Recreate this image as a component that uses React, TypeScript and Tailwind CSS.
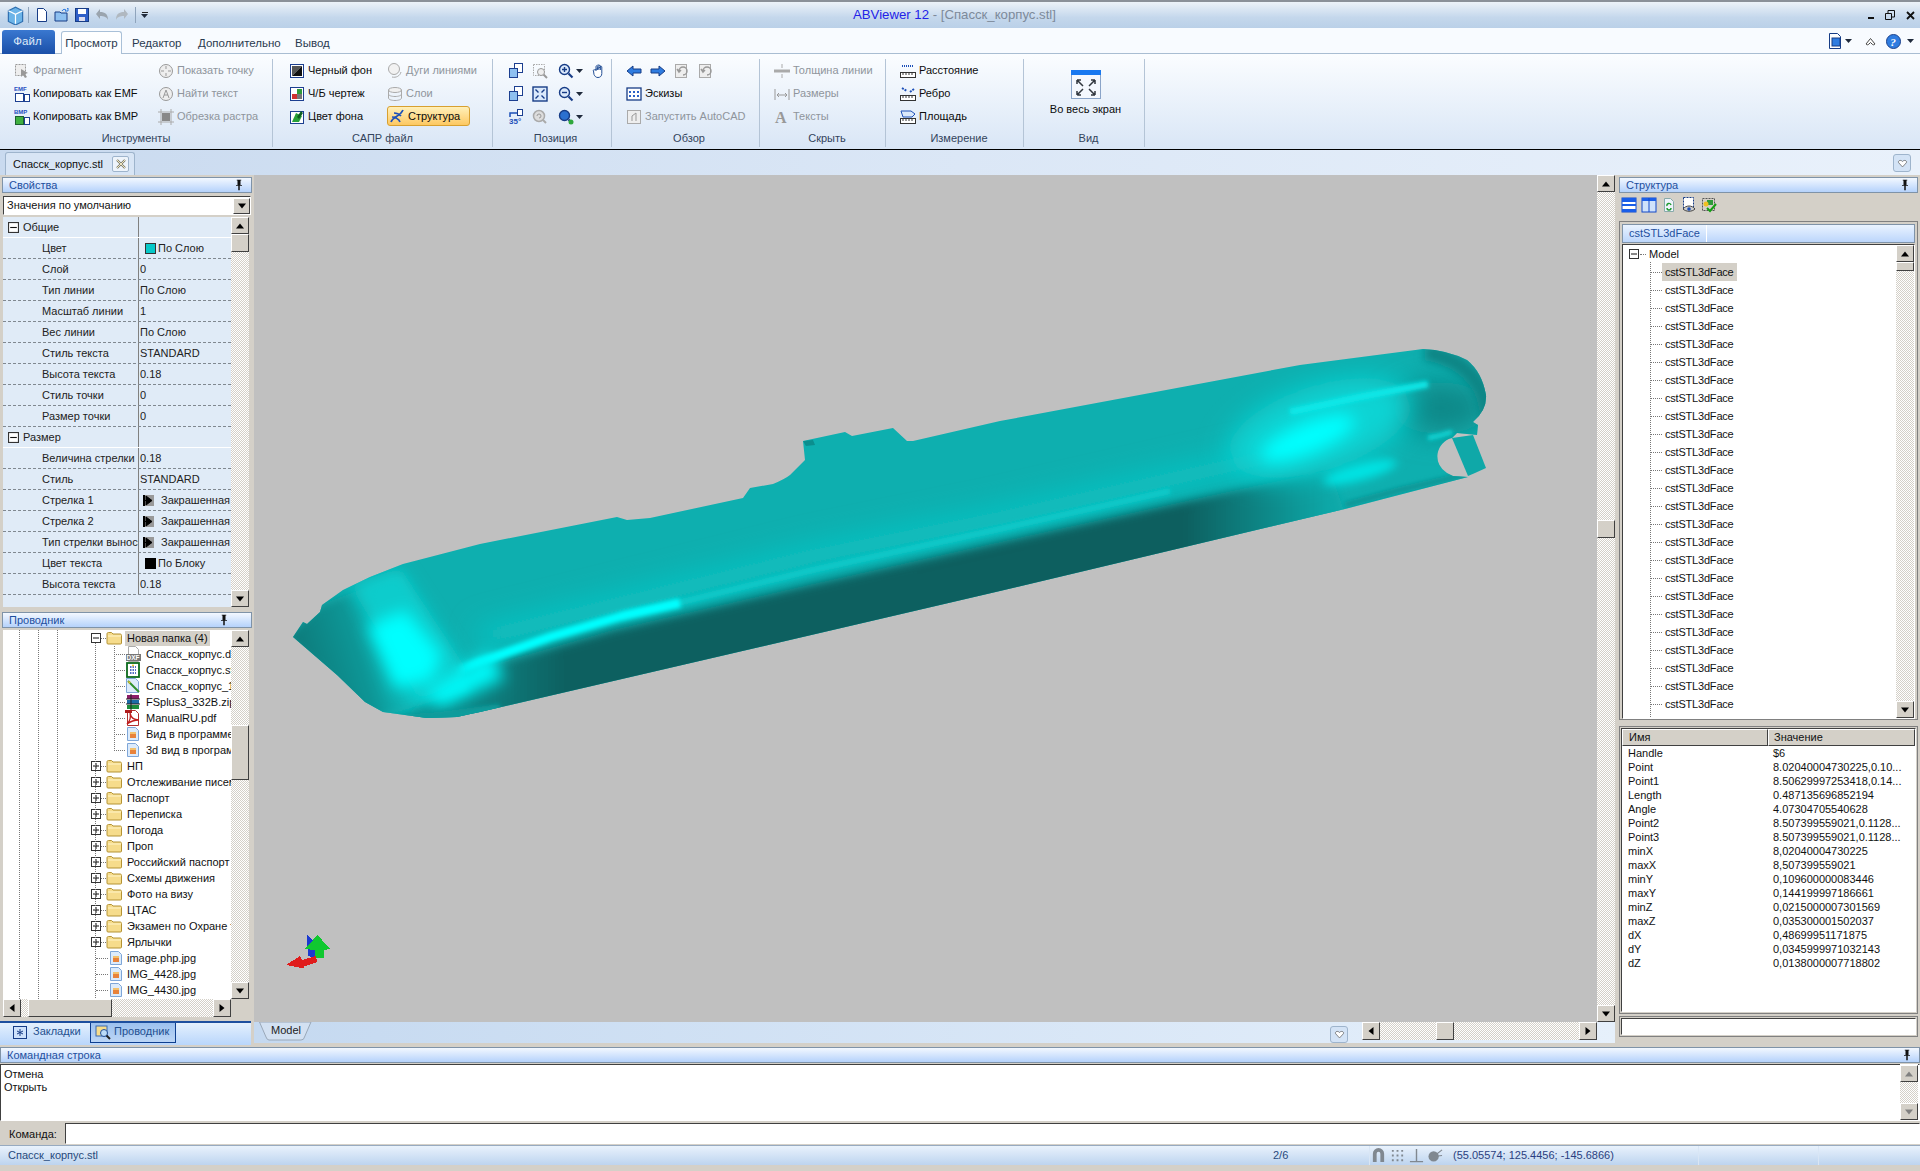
import type { ReactNode } from "react";

const FRAME = "border border-t-white border-l-white border-r-[#404040] border-b-[#404040] bg-[#d4d0c8]";
const TRACK = "bg-[repeating-conic-gradient(#d4d0c8_0_25%,#ffffff_0_50%)] bg-[length:2px_2px]";
const SUNKEN = "border border-t-[#404040] border-l-[#404040] border-r-white border-b-white";
const HEADER = "flex h-[16px] items-center justify-between border border-[#7f93a8] bg-gradient-to-b from-[#f3f8ff] to-[#b5d2fb] pl-[6px] pr-[6px] text-[11px] text-[#1e4f9e]";

function Svg({ size = 16, children, className }: { size?: number; children: ReactNode; className?: string }) {
  return (
    <svg width={size} height={size} viewBox="0 0 16 16" className={`shrink-0 ${className ?? ""}`}>
      {children}
    </svg>
  );
}

const ICONS: Record<string, ReactNode> = {
  fragment: (
    <>
      <rect x="1.5" y="1.5" width="10" height="11" fill="#eee" stroke="#999" strokeDasharray="2 1" />
      <path d="M7 6l7 4-3 1 2 3-2 1-2-3-2 2z" fill="#999" />
    </>
  ),
  emf: (
    <>
      <text x="0" y="5" fontSize="6" fill="#1f4fc0" fontFamily="Liberation Sans" fontWeight="700">EMF</text>
      <rect x="1.5" y="7.5" width="8" height="8" fill="#fff" stroke="#1c3f90" />
      <rect x="10.5" y="8.5" width="5" height="7" fill="#fff" stroke="#1c3f90" />
    </>
  ),
  bmp: (
    <>
      <text x="0" y="5" fontSize="6" fill="#1f4fc0" fontFamily="Liberation Sans" fontWeight="700">BMP</text>
      <rect x="1.5" y="7.5" width="8" height="8" fill="#40b040" stroke="#1c5f30" />
      <rect x="10.5" y="8.5" width="5" height="7" fill="#fff" stroke="#1c3f90" />
    </>
  ),
  point: (
    <>
      <circle cx="8" cy="8" r="6.5" fill="#eee" stroke="#999" />
      <path d="M8 3v3M8 10v3M3 8h3M10 8h3" stroke="#999" />
    </>
  ),
  findText: (
    <>
      <circle cx="8" cy="8" r="6.5" fill="#eee" stroke="#999" />
      <path d="M5 12l3-8 3 8M6 9h4" stroke="#999" fill="none" />
    </>
  ),
  crop: (
    <>
      <path d="M3 0v16M13 0v16M0 3h16M0 13h16" stroke="#aaa" />
      <rect x="4" y="4" width="8" height="8" fill="#888" />
    </>
  ),
  black: (
    <>
      <rect x="1.5" y="1.5" width="13" height="13" fill="#fff" stroke="#1c3f90" />
      <path d="M3 13V3h10z" fill="#555" />
      <path d="M13 3v10H3z" fill="#111" />
    </>
  ),
  bw: (
    <>
      <rect x="1.5" y="1.5" width="13" height="13" fill="#fff" stroke="#1c3f90" />
      <rect x="8" y="3" width="5" height="5" fill="#2f9a3a" />
      <rect x="3" y="8" width="5" height="5" fill="#d03030" />
      <rect x="8" y="8" width="5" height="5" fill="#777" />
    </>
  ),
  bgcolor: (
    <>
      <rect x="1.5" y="2.5" width="13" height="12" fill="#fff" stroke="#1c3f90" />
      <path d="M3 13l4-9 6 3-3 6z" fill="#28a038" />
      <path d="M8 8l4-6 2 2-4 6z" fill="#0c5f20" />
    </>
  ),
  arcs: (
    <>
      <circle cx="7" cy="6" r="5.5" fill="#f2f2f2" stroke="#aaa" />
      <path d="M5 14c4 1 8-1 9-5" fill="none" stroke="#aaa" />
    </>
  ),
  layers: (
    <>
      <ellipse cx="8" cy="4" rx="6.5" ry="2.5" fill="#f0f0f0" stroke="#aaa" />
      <path d="M1.5 4v8c0 1.5 3 2.5 6.5 2.5s6.5-1 6.5-2.5V4M1.5 8c0 1.5 3 2.5 6.5 2.5s6.5-1 6.5-2.5" fill="none" stroke="#aaa" />
    </>
  ),
  dna: (
    <path d="M2 14C4 8 11 9 14 2M3 9c3 0 7 2 8 5M5 5c2 0 5 1 7 3" fill="none" stroke="#1d50b8" strokeWidth="1.7" />
  ),
  pagesA: (
    <>
      <rect x="6.5" y="0.5" width="8" height="9" fill="#fff" stroke="#1c3f90" />
      <rect x="1.5" y="5.5" width="8" height="9" fill="#8ec0f0" stroke="#1c3f90" />
    </>
  ),
  zoomWin: (
    <>
      <rect x="1.5" y="1.5" width="11" height="11" fill="none" stroke="#aaa" strokeDasharray="1.5 1" />
      <circle cx="9" cy="9" r="3.5" fill="#eee" stroke="#999" />
      <path d="M12 12l3 3" stroke="#999" strokeWidth="2" />
    </>
  ),
  zoomIn: (
    <>
      <circle cx="6.5" cy="6.5" r="5" fill="#dbe9fb" stroke="#173c86" strokeWidth="1.4" />
      <path d="M4 6.5h5M6.5 4v5" stroke="#173c86" strokeWidth="1.4" />
      <path d="M10.5 10.5l4 4" stroke="#173c86" strokeWidth="2.2" />
    </>
  ),
  zoomOut: (
    <>
      <circle cx="6.5" cy="6.5" r="5" fill="#dbe9fb" stroke="#173c86" strokeWidth="1.4" />
      <path d="M4 6.5h5" stroke="#173c86" strokeWidth="1.4" />
      <path d="M10.5 10.5l4 4" stroke="#173c86" strokeWidth="2.2" />
    </>
  ),
  zoomGlobe: (
    <>
      <circle cx="6.5" cy="6.5" r="5" fill="#2b70d0" stroke="#173c86" strokeWidth="1.4" />
      <path d="M10.5 10.5l3 3" stroke="#173c86" strokeWidth="2.2" />
      <circle cx="13" cy="13" r="2.5" fill="#2fa83c" />
    </>
  ),
  hand: (
    <path d="M4 8V3.5c0-1 1.4-1 1.4 0V7m0-4.500c0-1 1.500-1 1.500 0V7m0-4c0-1 1.500-1 1.500 0v4m0-3c0-1 1.400-1 1.400 0v6.500c0 2.500-1.600 4-3.800 4-2 0-3-1-4-3L1.500 8c-.7-1 .7-1.800 1.400-1z" fill="#fff" stroke="#234f96" />
  ),
  fit: (
    <>
      <rect x="1" y="1" width="14" height="14" fill="#dbe9fb" stroke="#173c86" strokeWidth="1.4" />
      <path d="M3.500 3.500l3 3M12.500 3.500l-3 3M3.500 12.500l3-3M12.500 12.500l-3-3" stroke="#173c86" strokeWidth="1.400" />
    </>
  ),
  rot: (
    <>
      <path d="M2 8V4h7" fill="none" stroke="#1d50b8" strokeWidth="1.500" />
      <rect x="9.500" y="0.500" width="5" height="6" fill="#fff" stroke="#1c3f90" />
      <text x="1" y="15" fontSize="8" fill="#1d50b8" fontFamily="Liberation Sans" fontWeight="700">35°</text>
    </>
  ),
  grayZoom: (
    <>
      <circle cx="7" cy="7" r="5.500" fill="#ddd" stroke="#aaa" strokeWidth="1.500" />
      <path d="M5 7a2 2 0 1 1 2 2" fill="none" stroke="#999" />
      <path d="M11 11l3 3" stroke="#aaa" strokeWidth="2" />
    </>
  ),
  left: <path d="M1 8l6-5v3h8v4H7v3z" fill="#2f7ce0" stroke="#173c86" />,
  right: <path d="M15 8L9 3v3H1v4h8v3z" fill="#2f7ce0" stroke="#173c86" />,
  back: (
    <>
      <rect x="1.500" y="1.500" width="11" height="13" fill="#eee" stroke="#aaa" />
      <path d="M5 8a4 4 0 1 1 4 4M3 6l2 3 2-2" fill="none" stroke="#999" strokeWidth="1.500" />
    </>
  ),
  thumbs: (
    <>
      <rect x="1" y="2" width="14" height="12" fill="#fff" stroke="#173c86" strokeWidth="1.300" />
      <path d="M3 5h2v2H3zM7 5h2v2H7zM11 5h2v2h-2zM3 9h2v2H3zM7 9h2v2H7zM11 9h2v2h-2z" fill="#2b62c8" />
    </>
  ),
  autocad: (
    <>
      <rect x="1.500" y="1.500" width="13" height="13" fill="#eee" stroke="#aaa" />
      <path d="M6 12V7l4-3v8" fill="none" stroke="#999" />
    </>
  ),
  thick: <path d="M8 1v4M8 11v4M0 7h16v2H0z" stroke="#aaa" fill="#aaa" />,
  dims: <path d="M1 3v11M15 3v11M3 9h10M3 9l2-2M3 9l2 2M13 9l-2-2M13 9l-2 2" stroke="#999" fill="none" />,
  texts: <text x="1" y="14" fontSize="16" fill="#999" fontFamily="Liberation Serif" fontWeight="700">A</text>,
  dist: (
    <>
      <path d="M2 3h12" stroke="#1d50b8" strokeDasharray="1 1" strokeWidth="2" />
      <rect x="0.500" y="9.500" width="15" height="5" fill="#fff" stroke="#333" />
      <path d="M3 10v2M6 10v2M9 10v2M12 10v2" stroke="#333" />
    </>
  ),
  edge: (
    <>
      <path d="M2 2l5 3M10 6l4-3" stroke="#1d50b8" strokeWidth="2" strokeDasharray="2 1" />
      <rect x="0.500" y="9.500" width="15" height="5" fill="#fff" stroke="#333" />
      <path d="M3 10v2M6 10v2M9 10v2M12 10v2" stroke="#333" />
    </>
  ),
  area: (
    <>
      <path d="M1 2h10l4 3-3 3H3z" fill="#dbe9fb" stroke="#1d50b8" />
      <rect x="0.500" y="9.500" width="15" height="5" fill="#fff" stroke="#333" />
      <path d="M3 10v2M6 10v2M9 10v2M12 10v2" stroke="#333" />
    </>
  ),
  file: <path d="M3.500 1.500h6l3 3v10h-9z" fill="#fff" stroke="#173c86" />,
  open: (
    <>
      <path d="M1 14V5h5l1 1h6v8z" fill="#8ec0f0" stroke="#173c86" />
      <path d="M8 4c1-2 3-2 4-1l-1 1h3V1l-1 1" fill="none" stroke="#2f7ce0" />
    </>
  ),
  save: (
    <>
      <rect x="1.500" y="1.500" width="13" height="13" fill="#2f5fc8" stroke="#173c86" />
      <rect x="4" y="2" width="8" height="5" fill="#fff" />
      <rect x="5" y="10" width="6" height="4" fill="#dde" />
    </>
  ),
  undo: <path d="M2 7l4-5v3c5 0 8 2 8 8-1-3-4-4-8-4v3z" fill="#9aa4ae" />,
  redo: <path d="M14 7l-4-5v3C5 5 2 7 2 13c1-3 4-4 8-4v3z" fill="#b0b8c0" />,
  logo: (
    <>
      <path d="M2 4l6-3 6 3v9l-6 3-6-3z" fill="#6cb4e8" stroke="#2f6fb0" />
      <path d="M8 7v8M2 4l6 3 6-3" stroke="#fff" fill="none" />
    </>
  ),
  rows: (
    <>
      <rect x="1" y="1" width="14" height="14" fill="#fff" stroke="#1348c8" />
      <rect x="1" y="1" width="14" height="4" fill="#1a5ee8" />
      <rect x="1" y="7" width="14" height="2" fill="#1a5ee8" />
      <rect x="1" y="12" width="14" height="3" fill="#1a5ee8" />
    </>
  ),
  cols: (
    <>
      <rect x="1" y="1" width="14" height="14" fill="#cfe2fb" stroke="#1348c8" />
      <rect x="1" y="1" width="14" height="3" fill="#1a5ee8" />
      <path d="M8 1v14" stroke="#1348c8" />
    </>
  ),
  refresh: (
    <>
      <path d="M3.500 1.500h6l3 3v10h-9z" fill="#eef3fb" stroke="#8aa" />
      <path d="M6 9a2 2 0 0 1 4-1M10 11a2 2 0 0 1-4 0" fill="none" stroke="#1c9a2c" strokeWidth="1.400" />
    </>
  ),
  eye: (
    <>
      <rect x="2.500" y="0.500" width="10" height="12" fill="#fff" stroke="#173c86" strokeDasharray="2 1" />
      <path d="M2 12c3-4 9-4 12 0-3 3-9 3-12 0z" fill="#ccc" stroke="#444" />
      <circle cx="8" cy="12" r="1.800" fill="#1d50b8" />
    </>
  ),
  check: (
    <>
      <rect x="1.500" y="1.500" width="12" height="12" fill="none" stroke="#555" strokeDasharray="2 1" />
      <rect x="6" y="3" width="6" height="5" fill="#2f9a3a" />
      <circle cx="5" cy="7" r="2.500" fill="#f0c020" />
      <path d="M6 11l3 3 6-7" fill="none" stroke="#12a012" strokeWidth="2" />
    </>
  ),
  folder: (
    <>
      <path d="M1 13V4c0-1 .5-1.500 1.500-1.500h3L7 4h7c1 0 1.500.5 1.500 1.500V13c0 .8-.5 1-1 1H2c-.6 0-1-.3-1-1z" fill="#f6dc8c" stroke="#b49334" />
      <path d="M2 6h13" stroke="#fff4c8" />
    </>
  ),
  pic: (
    <>
      <path d="M2.500 1.500h8l3 3v10h-11z" fill="#dcebfb" stroke="#7ea6d8" />
      <rect x="5" y="6" width="6" height="6" fill="#e8823a" />
      <rect x="5" y="6" width="6" height="2" fill="#f3c06c" />
    </>
  ),
  dxf: (
    <>
      <path d="M3.500.5h7l3 3v12h-10z" fill="#fff" stroke="#aaa" />
      <rect x="1" y="8" width="15" height="7" fill="#777" />
      <text x="1.500" y="14" fontSize="6.500" fill="#fff" fontFamily="Liberation Sans" fontWeight="700">DXF</text>
    </>
  ),
  sheet: (
    <>
      <rect x="2" y="1" width="12" height="14" fill="#fff" stroke="#0c6a1c" strokeWidth="1.800" />
      <path d="M5 5h6M5 8h6M5 11h6" stroke="#1c3fb0" strokeWidth="1.400" strokeDasharray="1.500 1" />
      <circle cx="8" cy="3.500" r="1" fill="#f0c020" />
    </>
  ),
  pen: (
    <>
      <path d="M1.500.5h9l3 3v11h-12z" fill="#dcebfb" stroke="#7ea6d8" />
      <path d="M3 3l11 11" stroke="#2f8f2c" strokeWidth="2" />
      <path d="M3 3l3 1-2 2z" fill="#e8c030" />
    </>
  ),
  zip: (
    <>
      <rect x="2" y="1" width="12" height="4" fill="#8c1c68" />
      <rect x="2" y="6" width="12" height="4" fill="#1c6ca8" />
      <rect x="2" y="11" width="12" height="4" fill="#1c8c3c" />
      <path d="M6 0v16M1 5h14M1 10h14" stroke="#222" />
    </>
  ),
  pdf: (
    <>
      <path d="M2.500.5h8l3 3v12h-11z" fill="#fff" stroke="#b03030" />
      <path d="M2 14c3-3 4-7 3-11 1 5 4 7 9 7-4 0-8 1-12 4z" fill="none" stroke="#c01c1c" strokeWidth="1.300" />
      <rect x="0" y="0" width="7" height="3" fill="#b01c1c" />
    </>
  ),
  star: (
    <>
      <rect x="1.500" y="2.500" width="13" height="12" fill="#cfe2fb" stroke="#173c86" />
      <path d="M8 5v7M5 7l6 3M11 7l-6 3" stroke="#173c86" />
    </>
  ),
  explorer: (
    <>
      <rect x="1" y="2" width="11" height="10" fill="#f6dc8c" stroke="#3868b0" />
      <circle cx="9" cy="9" r="3.500" fill="#bcdcf8" stroke="#234f96" />
      <path d="M11.500 11.500l3.500 3.500" stroke="#222" strokeWidth="2" />
    </>
  ),
  magnet: <path d="M2 15V6a5 5 0 0 1 12 0v9h-4V6a2 2 0 0 0-4 0v9z" fill="#808890" />,
  grid: <path d="M2 2h2v2H2zM7 2h2v2H7zM12 2h2v2h-2zM2 7h2v2H2zM7 7h2v2H7zM12 7h2v2h-2zM2 12h2v2H2zM7 12h2v2H7zM12 12h2v2h-2z" fill="#808890" />,
  perp: <path d="M8 1v13M1 14.500h14" stroke="#808890" strokeWidth="1.500" />,
  polar: (
    <>
      <circle cx="6" cy="9" r="5.500" fill="#808890" />
      <path d="M6 9l9-7M6 9l9-1" stroke="#808890" strokeWidth="1.200" />
    </>
  ),
  screen: (
    <>
      <path d="M2.500 .5h8l3 3v12h-11z" fill="#fff" stroke="#173c86" />
      <rect x="5" y="5" width="8" height="8" fill="#2f7ce0" stroke="#173c86" />
    </>
  ),
  help: (
    <>
      <circle cx="8" cy="8" r="7.500" fill="#2f7ce0" stroke="#173c86" />
      <text x="4.500" y="13" fontSize="12" fill="#fff" fontFamily="Liberation Serif" fontWeight="700" fontStyle="italic">?</text>
    </>
  ),
  heart: <path d="M8 13L2.500 7c-2-3 3-5 5.500-2 2.500-3 7.500-1 5.500 2z" fill="#fff" stroke="#555" />,
  pin: <path d="M5 1h6v1h-1v6h2v1H9v6H7V9H4V8h2V2H5z" fill="#111" />,
};

function Ico({ name, size = 16 }: { name: string; size?: number }) {
  return <Svg size={size}>{ICONS[name]}</Svg>;
}

function Caret({ className }: { className?: string }) {
  return (
    <svg width="7" height="4" viewBox="0 0 7 4" className={`shrink-0 ${className ?? ""}`}>
      <path d="M0 0h7L3.500 4z" fill="#1f2a3c" />
    </svg>
  );
}

function ScrollBtn({ dir, muted, className }: { dir: "up" | "down" | "left" | "right"; muted?: boolean; className?: string }) {
  const d = { up: "M0 5L4 0l4 5z", down: "M0 0h8L4 5z", left: "M5 0v8L0 4z", right: "M0 0v8l5-4z" }[dir];
  return (
    <div className={`flex shrink-0 items-center justify-center ${FRAME} ${className ?? ""}`}>
      <svg width="8" height="8" viewBox="0 0 8 8">
        <path d={d} fill={muted ? "#808080" : "#000"} transform={dir === "up" || dir === "down" ? "translate(0 1.500)" : "translate(1.500 0)"} />
      </svg>
    </div>
  );
}

function VScroll({ before, thumb, muted, noThumb }: { before: string; thumb: string; muted?: boolean; noThumb?: boolean }) {
  return (
    <div className={`flex h-full w-[18px] shrink-0 flex-col ${TRACK}`}>
      <ScrollBtn dir="up" muted={muted} className="h-[17px]" />
      <div className={before} />
      {noThumb ? null : <div className={`${FRAME} ${thumb}`} />}
      <div className="flex-1" />
      <ScrollBtn dir="down" muted={muted} className="h-[17px]" />
    </div>
  );
}

function RibbonBtn({ icon, label, off }: { icon: string; label: string; off?: boolean }) {
  return (
    <div className={`flex h-[23px] items-center gap-[3px] whitespace-nowrap ${off ? "text-[#8f959c]" : "text-[#0c0c0c]"}`}>
      <Ico name={icon} />
      <span>{label}</span>
    </div>
  );
}

function RibbonGroup({ label, className, labelClass, children }: { label: string; className: string; labelClass?: string; children: ReactNode }) {
  return (
    <div className={`flex h-[88px] shrink-0 flex-col border-r border-[#b4c4d6] ${className}`}>
      <div className="flex h-[69px]">{children}</div>
      <div className={`mt-[2px] text-center leading-[16px] text-[#33445c] ${labelClass ?? ""}`}>{label}</div>
    </div>
  );
}

function Ribbon() {
  return (
    <div className="flex h-[95px] bg-gradient-to-b from-[#fbfdff] to-[#d9e6f6] pt-[5px]">
      <RibbonGroup label="Инструменты" className="w-[273px]">
        <div className="w-[158px] shrink-0 pl-[14px]">
          <RibbonBtn icon="fragment" label="Фрагмент" off />
          <RibbonBtn icon="emf" label="Копировать как EMF" />
          <RibbonBtn icon="bmp" label="Копировать как BMP" />
        </div>
        <div>
          <RibbonBtn icon="point" label="Показать точку" off />
          <RibbonBtn icon="findText" label="Найти текст" off />
          <RibbonBtn icon="crop" label="Обрезка растра" off />
        </div>
      </RibbonGroup>
      <RibbonGroup label="САПР файл" className="w-[220px]">
        <div className="w-[114px] shrink-0 pl-[16px]">
          <RibbonBtn icon="black" label="Черный фон" />
          <RibbonBtn icon="bw" label="Ч/Б чертеж" />
          <RibbonBtn icon="bgcolor" label="Цвет фона" />
        </div>
        <div>
          <RibbonBtn icon="arcs" label="Дуги линиями" off />
          <RibbonBtn icon="layers" label="Слои" off />
          <div className="mt-[1px] flex h-[20px] w-[83px] items-center gap-[3px] rounded-[3px] border border-[#d8a030] bg-gradient-to-b from-[#fff0b8] to-[#fdc860] pl-[1px] text-[#0c0c0c]">
            <Ico name="dna" />
            <span>Структура</span>
          </div>
        </div>
      </RibbonGroup>
      <RibbonGroup label="Позиция" className="w-[119px]" labelClass="pl-[7px]">
        <div className="grid h-[69px] grid-cols-[24px_26px_34px_16px] grid-rows-3 items-center pl-[15px]">
          <Ico name="pagesA" />
          <Ico name="zoomWin" />
          <div className="flex items-center gap-[2px]"><Ico name="zoomIn" /><Caret /></div>
          <Ico name="hand" />
          <Ico name="pagesA" />
          <Ico name="fit" />
          <div className="flex items-center gap-[2px]"><Ico name="zoomOut" /><Caret /></div>
          <div />
          <Ico name="rot" />
          <Ico name="grayZoom" />
          <div className="flex items-center gap-[2px]"><Ico name="zoomGlobe" /><Caret /></div>
          <div />
        </div>
      </RibbonGroup>
      <RibbonGroup label="Обзор" className="w-[148px]" labelClass="pl-[7px]">
        <div className="pl-[14px]">
          <div className="flex h-[23px] items-center gap-[8px]">
            <Ico name="left" />
            <Ico name="right" />
            <Ico name="back" />
            <Ico name="back" />
          </div>
          <RibbonBtn icon="thumbs" label="Эскизы" />
          <RibbonBtn icon="autocad" label="Запустить AutoCAD" off />
        </div>
      </RibbonGroup>
      <RibbonGroup label="Скрыть" className="w-[126px]" labelClass="pl-[9px]">
        <div className="pl-[14px]">
          <RibbonBtn icon="thick" label="Толщина линии" off />
          <RibbonBtn icon="dims" label="Размеры" off />
          <RibbonBtn icon="texts" label="Тексты" off />
        </div>
      </RibbonGroup>
      <RibbonGroup label="Измерение" className="w-[138px]" labelClass="pl-[9px]">
        <div className="pl-[14px]">
          <RibbonBtn icon="dist" label="Расстояние" />
          <RibbonBtn icon="edge" label="Ребро" />
          <RibbonBtn icon="area" label="Площадь" />
        </div>
      </RibbonGroup>
      <RibbonGroup label="Вид" className="w-[121px]" labelClass="pl-[9px]">
        <div className="flex w-full flex-col items-center pl-[3px] pt-[11px]">
          <svg width="30" height="29" viewBox="0 0 30 29">
            <rect x="0.500" y="0.500" width="29" height="28" fill="#f4f8fe" stroke="#8aa4c8" />
            <rect x="0" y="0" width="30" height="5" fill="#1878f0" />
            <path d="M6 10l6 6M6 10h4M6 10v4M24 10l-6 6M24 10h-4M24 10v4M6 25l6-6M6 25h4M6 25v-4M24 25l-6-6M24 25h-4M24 25v-4" stroke="#30363e" strokeWidth="1.500" fill="none" />
          </svg>
          <div className="mt-[2px] text-[#0c0c0c]">Во весь экран</div>
        </div>
      </RibbonGroup>
    </div>
  );
}

function TitleBar() {
  return (
    <div className="relative flex h-[28px] items-center border-t-2 border-[#8b9199] bg-gradient-to-b from-[#edf3f9] via-[#c4d7ec] via-60% to-[#bad0e8] pl-[6px]">
      <Ico name="logo" size={19} />
      <div className="ml-[3px] mr-[5px] h-[16px] w-px bg-[#8fa4bc]" />
      <div className="flex items-center gap-[4px]">
        <Ico name="file" size={16} />
        <Ico name="open" size={16} />
        <Ico name="save" size={16} />
        <Ico name="undo" size={16} />
        <Ico name="redo" size={16} />
      </div>
      <div className="ml-[5px] mr-[5px] h-[16px] w-px bg-[#8fa4bc]" />
      <div className="flex flex-col items-center gap-[1px]">
        <div className="h-px w-[6px] bg-[#222]" />
        <Caret />
      </div>
      <div className="absolute left-[853px] top-[5px] text-[13.2px] leading-[16px] whitespace-nowrap text-[#7d8a9a]">
        <span className="text-[#2323e8]">ABViewer 12</span> - [Спасск_корпус.stl]
      </div>
      <div className="ml-auto flex items-center gap-[11px] pr-[5px]">
        <div className="mt-[6px] h-[2px] w-[6px] bg-[#111]" />
        <svg width="10" height="10" viewBox="0 0 10 10"><path d="M.5 3.500h6v6h-6zM3 3V.5h6.500V7H7" fill="none" stroke="#111" /></svg>
        <svg width="9" height="9" viewBox="0 0 9 9"><path d="M1 1l7 7M8 1L1 8" stroke="#111" strokeWidth="1.800" /></svg>
      </div>
    </div>
  );
}

function RibbonTabs() {
  return (
    <div className="flex h-[26px] items-end border-b border-[#a9bdd2] bg-[#f8fbff] pl-[2px] text-[11.5px] text-[#2a3a50]">
      <div className="mb-[-1px] flex h-[24px] w-[53px] items-center justify-center rounded-t-[3px] bg-gradient-to-b from-[#3a78d0] to-[#1a4fa8] pr-[2px] text-[#dfeaf8]">Файл</div>
      <div className="mb-[-1px] ml-[6px] flex h-[23px] w-[61px] items-center justify-center rounded-t-[3px] border border-b-0 border-[#a9c0d8] bg-gradient-to-b from-[#ffffff] to-[#fbfdff] pt-[2px]">Просмотр</div>
      <div className="mb-0 ml-[10px] h-[19px] w-[66px] leading-[19px]">Редактор</div>
      <div className="mb-0 h-[19px] w-[97px] leading-[19px]">Дополнительно</div>
      <div className="mb-0 h-[19px] leading-[19px]">Вывод</div>
      <div className="mb-[4px] ml-auto flex items-center gap-[2px] pr-[6px]">
        <Ico name="screen" size={16} />
        <Caret className="mr-[11px]" />
        <svg width="11" height="9" viewBox="0 0 11 9" className="mr-[8px]"><path d="M1 7l4.500-5.500L10 7c-1 1.200-2 1-3 0l-1.500-1.500L4 7C3 8 2 8.200 1 7z" fill="#fff" stroke="#444" /></svg>
        <Ico name="help" size={15} />
        <Caret className="ml-[4px]" />
      </div>
    </div>
  );
}

function DocTabs() {
  return (
    <div className="flex h-[26px] items-end border-t border-black bg-gradient-to-r from-[#c9daef] via-[#dbe7f6] to-[#e9f1fb] pl-[5px]">
      <div className="flex h-[23px] w-[130px] items-center justify-between rounded-t-[3px] border border-b-0 border-[#9eb4cc] bg-[#d8e5f5] pl-[7px] pr-[5px] text-[#111]">
        <span>Спасск_корпус.stl</span>
        <div className="flex h-[16px] w-[17px] items-center justify-center rounded-[2px] border border-[#9eb4cc] bg-[#eef4fb]">
          <svg width="10" height="10" viewBox="0 0 10 10"><path d="M1 1l8 8M9 1L1 9" stroke="#7a7a6a" strokeWidth="2.200" /><path d="M1 1l8 8M9 1L1 9" stroke="#f0e6c0" strokeWidth="1" /></svg>
        </div>
      </div>
      <div className="mb-[3px] ml-auto mr-[9px] flex h-[18px] w-[18px] items-center justify-center rounded-[3px] border border-[#9eb4cc] bg-[#d3e3f6]">
        <Ico name="heart" size={11} />
      </div>
    </div>
  );
}

const GENERAL: [string, string, string?][] = [
  ["Цвет", "По Слою", "cyan"],
  ["Слой", "0"],
  ["Тип линии", "По Слою"],
  ["Масштаб линии", "1"],
  ["Вес линии", "По Слою"],
  ["Стиль текста", "STANDARD"],
  ["Высота текста", "0.18"],
  ["Стиль точки", "0"],
  ["Размер точки", "0"],
];

const SIZE: [string, string, string?][] = [
  ["Величина стрелки", "0.18"],
  ["Стиль", "STANDARD"],
  ["Стрелка 1", "Закрашенная", "arrow"],
  ["Стрелка 2", "Закрашенная", "arrow"],
  ["Тип стрелки выноска", "Закрашенная", "arrow"],
  ["Цвет текста", "По Блоку", "black"],
  ["Высота текста", "0.18"],
];

function Box({ open, size = 10 }: { open: boolean; size?: number }) {
  return (
    <svg width={size} height={size} viewBox="0 0 10 10" className="shrink-0">
      <rect x=".5" y=".5" width="9" height="9" fill="#fff" stroke="#333" />
      <path d={open ? "M2 5h6" : "M2 5h6M5 2v6"} stroke="#111" />
    </svg>
  );
}

function PropRow({ row }: { row: [string, string, string?] }) {
  const [name, value, mark] = row;
  return (
    <div className="flex h-[21px] items-center border-b border-dashed border-[#808890]">
      <div className="w-[135px] shrink-0 overflow-hidden pl-[39px] whitespace-nowrap">{name}</div>
      <div className="flex h-full flex-1 items-center overflow-hidden border-l border-[#808080] pl-[1px] whitespace-nowrap">
        {mark === "cyan" ? <div className="ml-[5px] mr-[2px] h-[11px] w-[11px] shrink-0 border border-[#333] bg-[#06c8c8]" /> : null}
        {mark === "black" ? <div className="ml-[5px] mr-[2px] h-[11px] w-[11px] shrink-0 bg-black" /> : null}
        {mark === "arrow" ? (
          <svg width="11" height="11" viewBox="0 0 11 11" className="ml-[3px] mr-[7px] shrink-0">
            <rect width="11" height="11" fill="#999" />
            <path d="M0 5.500h3M3 1l6 4.500L3 10z" stroke="#000" fill="#000" />
            <path d="M0 0h2v11H0z" fill="#000" />
          </svg>
        ) : null}
        <span>{value}</span>
      </div>
    </div>
  );
}

function GroupRow({ label }: { label: string }) {
  return (
    <div className="flex h-[21px] items-center border-b border-white pl-[5px]">
      <Box open size={11} />
      <span className="w-[119px] pl-[4px]">{label}</span>
      <div className="h-full border-l border-[#808080]" />
    </div>
  );
}

function Properties() {
  return (
    <div className="flex h-[435px] flex-col">
      <div className={`mx-[2px] mt-[2px] ${HEADER}`}>
        <span>Свойства</span>
        <Ico name="pin" size={12} />
      </div>
      <div className={`mx-[3px] mt-[3px] flex h-[19px] items-center justify-between bg-white pl-[3px] text-[#111] ${SUNKEN}`}>
        <span>Значения по умолчанию</span>
        <ScrollBtn dir="down" className="h-[16px] w-[17px]" />
      </div>
      <div className="mx-[3px] mt-[2px] flex h-[390px] text-[#222]">
        <div className="h-full w-[228px] bg-[#e0ebf7]">
          <GroupRow label="Общие" />
          {GENERAL.map((row) => <PropRow key={row[0]} row={row} />)}
          <GroupRow label="Размер" />
          {SIZE.map((row) => <PropRow key={row[0] + row[1]} row={row} />)}
        </div>
        <VScroll before="h-0" thumb="h-[18px]" />
      </div>
    </div>
  );
}

const EXPLORER: { icon: string; label: string; indent: "sub" | "folder" | "root"; open?: boolean; sel?: boolean }[] = [
  { icon: "folder", label: "Новая папка (4)", indent: "folder", open: true, sel: true },
  { icon: "dxf", label: "Спасск_корпус.dxf", indent: "sub" },
  { icon: "sheet", label: "Спасск_корпус.stl", indent: "sub" },
  { icon: "pen", label: "Спасск_корпус_1.cdw", indent: "sub" },
  { icon: "zip", label: "FSplus3_332B.zip", indent: "sub" },
  { icon: "pdf", label: "ManualRU.pdf", indent: "sub" },
  { icon: "pic", label: "Вид в программе", indent: "sub" },
  { icon: "pic", label: "3d вид в программе", indent: "sub" },
  { icon: "folder", label: "НП", indent: "folder" },
  { icon: "folder", label: "Отслеживание писем", indent: "folder" },
  { icon: "folder", label: "Паспорт", indent: "folder" },
  { icon: "folder", label: "Переписка", indent: "folder" },
  { icon: "folder", label: "Погода", indent: "folder" },
  { icon: "folder", label: "Проп", indent: "folder" },
  { icon: "folder", label: "Российский паспорт", indent: "folder" },
  { icon: "folder", label: "Схемы движения", indent: "folder" },
  { icon: "folder", label: "Фото на визу", indent: "folder" },
  { icon: "folder", label: "ЦТАС", indent: "folder" },
  { icon: "folder", label: "Экзамен по Охране труда", indent: "folder" },
  { icon: "folder", label: "Ярлычки", indent: "folder" },
  { icon: "pic", label: "image.php.jpg", indent: "root" },
  { icon: "pic", label: "IMG_4428.jpg", indent: "root" },
  { icon: "pic", label: "IMG_4430.jpg", indent: "root" },
];

function ExplorerRow({ item }: { item: (typeof EXPLORER)[number] }) {
  return (
    <div className="flex h-4 items-center whitespace-nowrap">
      {item.indent === "sub" ? (
        <>
          <div className="ml-[111px] w-[11px] shrink-0 border-t border-dotted border-[#777]" />
          <Ico name={item.icon} />
          <span className="pl-[5px]">{item.label}</span>
        </>
      ) : item.indent === "root" ? (
        <>
          <div className="ml-[93px] w-[12px] shrink-0 border-t border-dotted border-[#777]" />
          <Ico name={item.icon} />
          <span className="pl-[3px]">{item.label}</span>
        </>
      ) : (
        <>
          <div className="ml-[88px]" />
          <Box open={!!item.open} size={10} />
          <div className="w-[5px] shrink-0 border-t border-dotted border-[#777]" />
          <Ico name={item.icon} />
          <span className={`ml-[3px] h-[15px] px-[2px] leading-[15px] ${item.sel ? "bg-[#d4d0c8]" : ""}`}>{item.label}</span>
        </>
      )}
    </div>
  );
}

function Explorer() {
  return (
    <div className="flex flex-1 flex-col">
      <div className={`mx-[2px] mt-[2px] ${HEADER}`}>
        <span>Проводник</span>
        <div className="pr-[15px]"><Ico name="pin" size={12} /></div>
      </div>
      <div className="mx-[3px] mt-[2px] flex h-[369px]">
        <div className="relative h-full w-[228px] overflow-hidden bg-white text-[#111]">
          <div className="absolute left-[16px] top-0 h-full border-l border-dotted border-[#777]" />
          <div className="absolute left-[35px] top-0 h-full border-l border-dotted border-[#777]" />
          <div className="absolute left-[54px] top-0 h-full border-l border-dotted border-[#777]" />
          <div className="absolute left-[92px] top-[13px] h-full border-l border-dotted border-[#777]" />
          <div className="absolute left-[111px] top-[16px] h-[105px] border-l border-dotted border-[#777]" />
          {EXPLORER.map((item) => <ExplorerRow key={item.label} item={item} />)}
        </div>
        <VScroll before="h-[78px]" thumb="h-[55px]" />
      </div>
      <div className="mx-[3px] flex h-[18px]">
        <div className={`flex w-[228px] ${TRACK}`}>
          <ScrollBtn dir="left" className="w-[18px]" />
          <div className="w-[7px]" />
          <div className={`w-[84px] ${FRAME}`} />
          <div className="flex-1" />
          <ScrollBtn dir="right" className="w-[18px]" />
        </div>
      </div>
      <div className="mr-[3px] mt-[4px] flex h-[24px] border-t-2 border-[#1d4f9e] bg-gradient-to-b from-[#e4f0fd] to-[#b9d6fb] text-[11px] text-[#1f4f8f]">
        <div className="flex w-[90px] items-center gap-[5px] pb-[5px] pl-[12px]">
          <Ico name="star" />
          <span>Закладки</span>
        </div>
        <div className="flex h-[20px] w-[86px] items-center gap-[3px] border border-t-0 border-[#0f3f8f] bg-gradient-to-b from-[#9cc1ef] to-[#bcd6f6] pb-[2px] pl-[4px]">
          <Ico name="explorer" />
          <span>Проводник</span>
        </div>
      </div>
    </div>
  );
}

const HULL = "M293,637 L303,622 L307,624 L320,612 L322,605 L343,590 L370,577 L403,564 L480,544 L617,517 L627,520 L650,518 L743,498 L750,488 L773,484 Q785,479 790,475 L805,460 L803,441 L845,432 L852,436 L893,428 L907,441 L913,441 L1000,421 L1300,365 L1423,349 Q1447,350 1467,360 Q1482,372 1486,395 Q1487,410 1473,422 L1478,425 L1477,435 L1457,433 L1452,438 A19,19 0 0 0 1447,473 L1453,476 L1468,477 L1345,509 L1000,591 L480,712 Q470,714 457,717 L427,718 L383,712 L365,702 L337,675 Z";

function Ship() {
  return (
    <svg viewBox="254 175 1343 847" className="h-full w-full">
      <defs>
        <clipPath id="hull"><path d={HULL} /></clipPath>
        <filter id="b2" filterUnits="userSpaceOnUse" x="254" y="175" width="1343" height="847"><feGaussianBlur stdDeviation="2" /></filter>
        <filter id="b5" filterUnits="userSpaceOnUse" x="254" y="175" width="1343" height="847"><feGaussianBlur stdDeviation="5" /></filter>
        <filter id="b8" filterUnits="userSpaceOnUse" x="254" y="175" width="1343" height="847"><feGaussianBlur stdDeviation="8" /></filter>
        <filter id="b14" filterUnits="userSpaceOnUse" x="254" y="175" width="1343" height="847"><feGaussianBlur stdDeviation="14" /></filter>
        <linearGradient id="dark" gradientUnits="userSpaceOnUse" x1="420" y1="0" x2="1330" y2="0">
          <stop offset="0" stopColor="#0b9898" />
          <stop offset="0.16" stopColor="#0a6060" />
          <stop offset="0.84" stopColor="#0a5f5f" />
          <stop offset="1" stopColor="#10a8a8" />
        </linearGradient>
        <linearGradient id="bowShade" gradientUnits="userSpaceOnUse" x1="295" y1="650" x2="390" y2="620">
          <stop offset="0" stopColor="#087a7a" />
          <stop offset="0.6" stopColor="#0a9696" />
          <stop offset="1" stopColor="#10c4c4" />
        </linearGradient>
      </defs>
      <g clipPath="url(#hull)">
        <rect x="254" y="175" width="1343" height="847" fill="#0eafaf" />
        <path d="M480,638 L813,556 L1000,518 L1290,452" fill="none" stroke="#0cc6c6" strokeWidth="20" filter="url(#b14)" />
        <path d="M400,724 L440,680 L613,630 L813,584 L1000,542 L1200,498 L1330,470 L1350,530 L1000,620 L480,740 Z" fill="url(#dark)" filter="url(#b5)" />
        <path d="M620,617 L813,570 L1000,529 L1170,491" fill="none" stroke="#0dcaca" strokeWidth="6" filter="url(#b2)" />
        <path d="M420,686 L480,662 L550,637 L625,615 L680,603" fill="none" stroke="#00ffff" strokeWidth="9" filter="url(#b2)" />
        <path d="M285,637 L320,605 L400,575 L470,690 L370,720 Z" fill="url(#bowShade)" filter="url(#b5)" />
        <path d="M350,585 L400,568 L470,675 L420,700 Z" fill="#10cccc" filter="url(#b8)" />
        <path d="M368,626 L405,610 L442,655 L432,680 L395,688 Z" fill="#00ffff" filter="url(#b8)" />
        <path d="M425,692 L490,652 L505,678 L440,708 Z" fill="#00f8f8" filter="url(#b8)" />
        <path d="M383,716 L440,712 L500,704 L500,724 L400,728 Z" fill="#0c9c9c" filter="url(#b2)" />
        <ellipse cx="1440" cy="408" rx="48" ry="26" fill="#0a8888" filter="url(#b14)" />
        <path d="M1425,352 Q1470,360 1484,395 L1490,420" fill="none" stroke="#0b8484" strokeWidth="16" filter="url(#b5)" />
        <ellipse cx="1320" cy="428" rx="95" ry="42" fill="#0cd4d4" transform="rotate(-18 1320 428)" filter="url(#b14)" />
        <path d="M1290,412 L1360,397 L1428,384" fill="none" stroke="#08e8e8" strokeWidth="7" filter="url(#b2)" />
        <ellipse cx="1308" cy="438" rx="50" ry="15" fill="#00ffff" transform="rotate(-22 1308 438)" filter="url(#b8)" />
        <ellipse cx="1360" cy="472" rx="38" ry="8" fill="#00e4e4" transform="rotate(-15 1360 472)" filter="url(#b5)" />
        <path d="M1428,438 Q1440,436 1452,432" fill="none" stroke="#10d8d8" strokeWidth="5" filter="url(#b2)" />
        <path d="M1345,505 L1400,490 L1468,474" fill="none" stroke="#0a9696" strokeWidth="6" filter="url(#b2)" />
        <path d="M803,441 L813,440 L815,445 L806,446 Z" fill="#0b8e8e" />
      </g>
      <path d="M1452,438 L1473,435 L1486,468 L1475,473 L1468,476 Z" fill="#0fa8a8" />
      <g shapeRendering="crispEdges">
        <path d="M307,935 L316,943 L316,958 L308,956 Z" fill="#1a3ad0" />
        <rect x="315" y="948" width="6" height="10" fill="#0a7a1a" />
        <path d="M317.500,935 L330,949 L324,950 L324,958 L315,958 L315,950 L305,949 Z" fill="#10c830" />
        <path d="M286,965 L300,956 L302,960 L316,956 L317,962 L303,967 L304,968 L302,968 Z" fill="#e01c1c" />
      </g>
    </svg>
  );
}

function Viewer() {
  return (
    <div className="flex h-[868px] w-[1361px] shrink-0 flex-col">
      <div className="flex h-[847px]">
        <div className="h-full w-[1343px] bg-[#c0c0c0]"><Ship /></div>
        <VScroll before="h-[328px]" thumb="h-[18px]" />
      </div>
      <div className="flex h-[21px] bg-gradient-to-r from-[#c5d9f0] to-[#e6f0fb]">
        <div className="relative ml-[5px] flex h-[20px] w-[54px] items-center justify-center text-[#222]">
          <svg width="54" height="20" viewBox="0 0 54 20" className="absolute left-0 top-0">
            <path d="M.5 0L7 15q1 3 3 3h32q3 0 3.500-3L52 0z" fill="#d3e1f2" stroke="#9aa8b8" />
          </svg>
          <span className="relative pb-[4px]">Model</span>
        </div>
        <div className="ml-auto mr-[14px] mt-[4px] flex h-[17px] w-[18px] items-center justify-center rounded-[3px] border border-[#9eb4cc] bg-[#d3e3f6]">
          <Ico name="heart" size={11} />
        </div>
        <div className={`mr-[18px] flex h-[18px] w-[235px] ${TRACK}`}>
          <ScrollBtn dir="left" className="w-[18px]" />
          <div className="w-[56px]" />
          <div className={`w-[18px] ${FRAME}`} />
          <div className="flex-1" />
          <ScrollBtn dir="right" className="w-[18px]" />
        </div>
      </div>
    </div>
  );
}

const PROPS: [string, string][] = [
  ["Handle", "$6"],
  ["Point", "8.02040004730225,0.10..."],
  ["Point1", "8.50629997253418,0.14..."],
  ["Length", "0.487135696852194"],
  ["Angle", "4.07304705540628"],
  ["Point2", "8.507399559021,0.1128..."],
  ["Point3", "8.507399559021,0.1128..."],
  ["minX", "8,02040004730225"],
  ["maxX", "8,507399559021"],
  ["minY", "0,109600000083446"],
  ["maxY", "0,144199997186661"],
  ["minZ", "0,0215000007301569"],
  ["maxZ", "0,035300001502037"],
  ["dX", "0,48699951171875"],
  ["dY", "0,0345999971032143"],
  ["dZ", "0,0138000007718802"],
];

function Structure() {
  return (
    <div className="ml-[4px] flex w-[299px] shrink-0 flex-col">
      <div className={`mt-[2px] ${HEADER}`}>
        <span>Структура</span>
        <Ico name="pin" size={12} />
      </div>
      <div className="flex h-[28px] items-start gap-[4px] pl-[2px] pt-[4px]">
        <Ico name="rows" />
        <Ico name="cols" />
        <Ico name="refresh" />
        <Ico name="eye" />
        <Ico name="check" />
      </div>
      <div className="h-[499px] border border-[#808080] p-[2px]">
        <div className="flex h-[19px] border border-[#7f93a8] bg-gradient-to-b from-[#eaf3ff] to-[#bcd6fb] text-[11px] text-[#1e4f9e]">
          <div className="border-r border-white pl-[6px] pr-[6px] leading-[17px]">cstSTL3dFace</div>
        </div>
        <div className={`mt-px flex h-[475px] bg-white text-[#111] ${SUNKEN}`}>
          <div className="relative h-full flex-1 overflow-hidden">
            <div className="absolute left-[27px] top-[17px] h-full border-l border-dotted border-[#777]" />
            <div className="flex h-[18px] items-center pl-[6px]">
              <Box open size={10} />
              <div className="mx-[1px] w-[6px] border-t border-dotted border-[#777]" />
              <span className="ml-[2px]">Model</span>
            </div>
            {Array.from({ length: 26 }, (_, i) => (
              <div key={i} className="flex h-[18px] items-center pl-[28px]">
                <div className="w-[11px] border-t border-dotted border-[#777]" />
                <span className={`flex h-[18px] items-center px-[3px] tracking-[-0.2px] ${i === 0 ? "bg-[#d4d0c8]" : ""}`}>cstSTL3dFace</span>
              </div>
            ))}
          </div>
          <VScroll before="h-0" thumb="h-[9px]" />
        </div>
      </div>
      <div className="mt-[6px] h-[288px] border border-[#808080] p-px">
        <div className={`flex h-full flex-col bg-white text-[#111] ${SUNKEN}`}>
          <div className="flex h-[17px] shrink-0">
            <div className={`w-[146px] pl-[6px] leading-[15px] ${FRAME}`}>Имя</div>
            <div className={`flex-1 pl-[5px] leading-[15px] ${FRAME}`}>Значение</div>
          </div>
          <div>
            {PROPS.map(([k, v]) => (
              <div key={k} className="flex h-[14px] items-center leading-[14px]">
                <div className="w-[151px] pl-[6px]">{k}</div>
                <div>{v}</div>
              </div>
            ))}
          </div>
        </div>
      </div>
      <div className="mt-[2px] h-[21px] border border-[#808080] p-px">
        <div className={`h-full bg-white ${SUNKEN}`} />
      </div>
    </div>
  );
}

function CommandPanel() {
  return (
    <div className="flex flex-col">
      <div className={`${HEADER} h-[16px]`}>
        <span>Командная строка</span>
        <Ico name="pin" size={12} />
      </div>
      <div className="flex h-[58px] pt-[1px]">
        <div className={`flex-1 bg-white pl-[3px] pt-[3px] leading-[13px] text-[#111] ${SUNKEN}`}>
          <div>Отмена</div>
          <div>Открыть</div>
        </div>
        <div className="mr-[2px] ml-[-20px] h-full bg-white py-[1px]">
          <VScroll before="h-0" thumb="h-0" muted noThumb />
        </div>
      </div>
      <div className="mt-[2px] flex h-[21px] bg-[#d4d0c8]">
        <div className="flex w-[65px] items-center pl-[9px] pt-[2px] text-[#111]">Команда:</div>
        <div className={`flex-1 bg-white ${SUNKEN}`} />
      </div>
    </div>
  );
}

function StatusBar() {
  return (
    <div className="mt-px flex h-[20px] items-center border-t border-[#97aac0] bg-gradient-to-b from-[#e9f2fc] to-[#bdd4ef] pl-[8px] text-[#274a7c]">
      <div className="w-[1265px] shrink-0">Спасск_корпус.stl</div>
      <div className="w-[96px] shrink-0">2/6</div>
      <div className="flex h-full w-[84px] shrink-0 items-center gap-[4px] border-l border-[#d9e6f5] pl-[1px]">
        <Ico name="magnet" size={15} />
        <Ico name="grid" size={15} />
        <Ico name="perp" size={15} />
        <Ico name="polar" size={15} />
      </div>
      <div className="w-[245px] shrink-0 text-[#2a3f80]">(55.05574; 125.4456; -145.6866)</div>
      <div className="h-full w-[121px] shrink-0 border-x border-[#d9e6f5]" />
    </div>
  );
}

export default function App() {
  return (
    <div className="flex h-[1171px] w-[1920px] flex-col overflow-hidden bg-[#d4d0c8] font-['Liberation_Sans',sans-serif] text-[11px]">
      <TitleBar />
      <RibbonTabs />
      <Ribbon />
      <DocTabs />
      <div className="flex h-[872px] shrink-0">
        <div className="flex w-[254px] shrink-0 flex-col">
          <Properties />
          <Explorer />
        </div>
        <Viewer />
        <Structure />
      </div>
      <CommandPanel />
      <StatusBar />
    </div>
  );
}
